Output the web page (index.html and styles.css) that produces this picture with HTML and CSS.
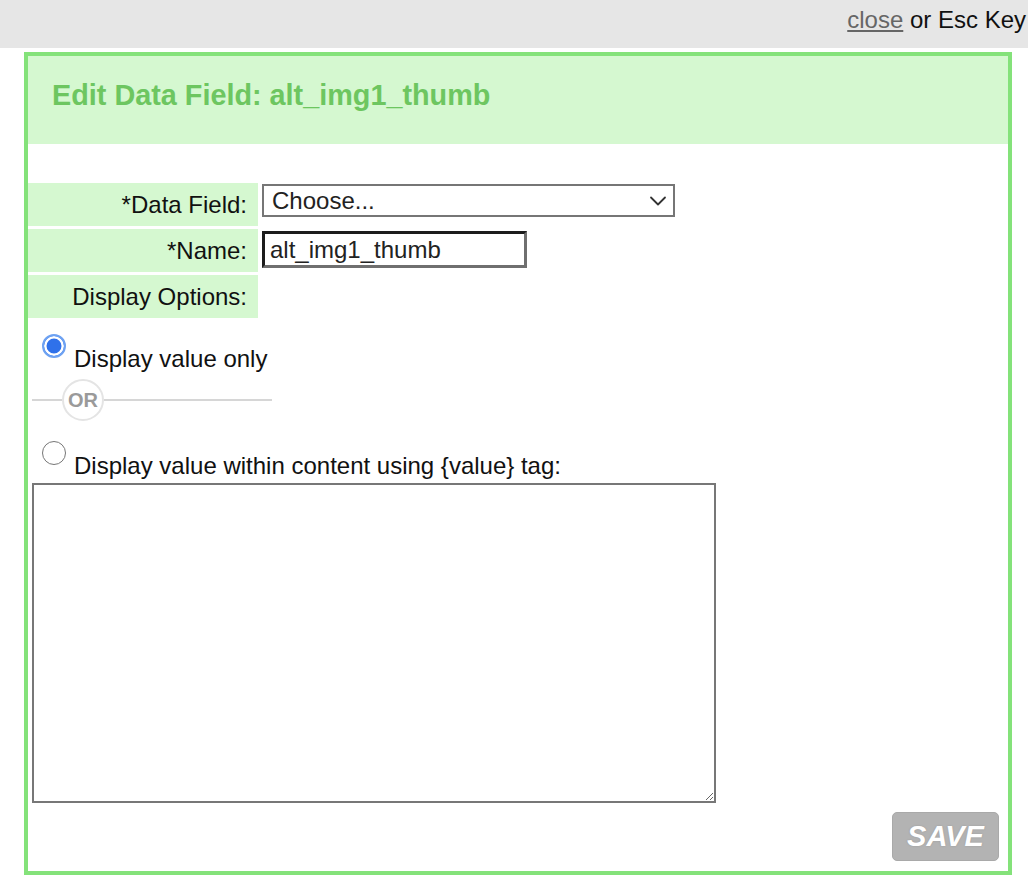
FILE: index.html
```html
<!DOCTYPE html>
<html>
<head>
<meta charset="utf-8">
<title>Edit Data Field</title>
<link rel="stylesheet" href="styles.css">
</head>
<body>
<div class="topbar"><a class="close-link" href="#">close</a> or Esc Key</div>
<div class="dialog">
  <div class="dialog-header"><h1 class="dialog-title">Edit Data Field: alt_img1_thumb</h1></div>
  <div class="form-grid">
    <div class="label-cell">*Data Field:</div>
    <div class="control-cell">
      <div class="select-wrap">
        <select class="field-select"><option>Choose...</option></select>
        <svg class="chevron" width="18" height="12" viewBox="0 0 18 12"><path d="M2 2.5 L9 9.5 L16 2.5" fill="none" stroke="#333" stroke-width="1.8" stroke-linecap="round" stroke-linejoin="round"/></svg>
      </div>
    </div>
    <div class="label-cell">*Name:</div>
    <div class="control-cell"><input class="name-input" type="text" value="alt_img1_thumb"></div>
    <div class="label-cell">Display Options:</div>
    <div class="control-cell"></div>
  </div>
  <label class="option option-first"><input class="radio" type="radio" name="disp" checked><span class="option-text">Display value only</span></label>
  <div class="or-divider"><span class="or-line-left"></span><span class="or-circle">OR</span><span class="or-line-right"></span></div>
  <label class="option option-second"><input class="radio" type="radio" name="disp"><span class="option-text">Display value within content using {value} tag:</span></label>
  <textarea class="content-area"></textarea>
  <div class="actions"><button class="save-btn" type="button">SAVE</button></div>
</div>
</body>
</html>
```
FILE: styles.css
```css
html, body {
  margin: 0;
  padding: 0;
  background: #ffffff;
  font-family: "Liberation Sans", Arial, Helvetica, sans-serif;
  font-size: 24px;
  color: #111;
}
.topbar {
  height: 48px;
  box-sizing: border-box;
  background: #e6e6e6;
  text-align: right;
  padding: 6px 2px 0 0;
  line-height: 28px;
  color: #111;
}
.close-link {
  color: #666;
  text-decoration: underline;
}
.dialog {
  margin: 4px 16px 0 24px;
  border: 4px solid #84e27a;
  background: #fff;
  padding-bottom: 10px;
}
.dialog-header {
  height: 88px;
  box-sizing: border-box;
  background: #d5f8d0;
  padding: 23px 0 0 24px;
}
.dialog-title {
  margin: 0;
  font-size: 28.8px;
  line-height: 33px;
  font-weight: bold;
  color: #6dc660;
}
.form-grid {
  display: grid;
  grid-template-columns: 230px 1fr;
  grid-auto-rows: 43px;
  column-gap: 4px;
  row-gap: 3px;
  margin-top: 39px;
}
.label-cell {
  background: #d5f8d0;
  display: flex;
  align-items: center;
  justify-content: flex-end;
  padding-right: 11px;
  line-height: 28px;
}
.control-cell {
  display: flex;
  align-items: flex-start;
}
.select-wrap {
  position: relative;
  margin-top: 1px;
  width: 413px;
  height: 33px;
}
.field-select {
  appearance: none;
  -webkit-appearance: none;
  width: 413px;
  height: 33px;
  box-sizing: border-box;
  border: 2px solid #767676;
  border-radius: 0;
  background: #fff;
  font-family: inherit;
  font-size: 24px;
  color: #222;
  padding: 0 0 0 8px;
  margin: 0;
  line-height: 29px;
}
.chevron {
  position: absolute;
  right: 8px;
  top: 11px;
  pointer-events: none;
}
.name-input {
  margin: 2px 0 0 0;
  width: 265px;
  height: 37px;
  box-sizing: border-box;
  border-style: solid;
  border-width: 3px;
  border-color: #1c1c1c #6f6f6f #6f6f6f #1c1c1c;
  font-family: inherit;
  font-size: 24px;
  color: #222;
  padding: 0 0 0 5px;
  outline: none;
}
.option {
  display: flex;
  align-items: flex-start;
}
.option-first {
  margin-top: 16px;
}
.option-second {
  margin-top: 20px;
}
.radio {
  appearance: none;
  -webkit-appearance: none;
  width: 24px;
  height: 24px;
  margin: 0 8px 0 14px;
  border-radius: 50%;
  border: 1.5px solid #767676;
  background: #fff;
  box-sizing: border-box;
  flex: none;
}
.radio:checked {
  border: 2px solid #6ea2f2;
  background: #2f71ea;
  box-shadow: inset 0 0 0 2.5px #fff;
}
.option-text {
  padding-top: 11px;
  line-height: 28px;
}
.or-divider {
  display: flex;
  align-items: center;
  width: 240px;
  height: 42px;
  margin: 6px 0 0 4px;
}
.or-line-left {
  width: 30px;
  height: 2px;
  background: #d6d6d6;
  flex: none;
}
.or-line-right {
  flex: 1;
  height: 2px;
  background: #d6d6d6;
}
.or-circle {
  width: 42px;
  height: 42px;
  box-sizing: border-box;
  border: 2px solid #e4e4e4;
  border-radius: 50%;
  display: flex;
  align-items: center;
  justify-content: center;
  font-size: 20px;
  font-weight: bold;
  color: #9a9a9a;
  flex: none;
}
.content-area {
  display: block;
  margin: 3px 0 0 4px;
  width: 684px;
  height: 320px;
  box-sizing: border-box;
  border: 2px solid #777;
  resize: both;
  font-family: inherit;
  font-size: 20px;
}
.actions {
  display: flex;
  justify-content: flex-end;
  padding-right: 9px;
  margin-top: 9px;
}
.save-btn {
  width: 107px;
  height: 49px;
  box-sizing: border-box;
  background: #b3b3b3;
  border: 1px solid #a9a9a9;
  border-radius: 5px;
  font-family: inherit;
  font-size: 29px;
  font-weight: bold;
  font-style: italic;
  color: #fff;
  text-shadow: 0 0 2px #999;
  padding: 0;
  margin: 0;
}
```
